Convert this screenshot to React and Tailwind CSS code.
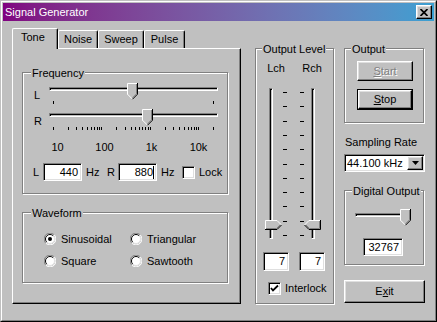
import React from "react";

// win98-ish bevels
const raised =
  "border border-t-white border-l-white border-b-black border-r-black shadow-[inset_-1px_-1px_0_#808080,inset_1px_1px_0_#dfdfdf] bg-[#c0c0c0]";
const sunken =
  "border border-t-[#808080] border-l-[#808080] border-b-white border-r-white shadow-[inset_1px_1px_0_#000,inset_-1px_-1px_0_#dfdfdf] bg-white";
const hTrack =
  "absolute h-[4px] border border-t-[#808080] border-l-[#808080] border-b-white border-r-white shadow-[inset_1px_1px_0_#000]";
const vTrack =
  "absolute w-[4px] border border-t-[#808080] border-l-[#808080] border-b-white border-r-white shadow-[inset_1px_1px_0_#000]";

// log scale 10 Hz .. 20 kHz over 160px
const logX = (f) => 9 + (160 * Math.log10(f / 10)) / Math.log10(2000);
const freqTicks = [];
for (let e = 1; e <= 3; e++) for (let d = 1; d <= 9; d++) freqTicks.push(d * 10 ** e);
freqTicks.push(10000, 20000);

const levelTicks = Array.from({ length: 11 }, (_, i) => 4 + Math.round(i * 14.3));

function Group({ label, labelPos, className, children }) {
  return (
    <div className={"relative border border-[#808080] shadow-[inset_1px_1px_0_#fff,1px_1px_0_#fff] " + className}>
      <span className={"absolute top-[-6px] bg-[#c0c0c0] px-[1px] whitespace-nowrap " + labelPos}>{label}</span>
      {children}
    </div>
  );
}

function ThumbDown({ className }) {
  return (
    <svg width="11" height="17" viewBox="0 0 11 17" className={"absolute top-0 " + className}>
      <path d="M0 0H11V11L5.5 16.5L0 11Z" fill="#c0c0c0" />
      <path d="M0.5 11.5V0.5H10" fill="none" stroke="#fff" />
      <path d="M0.5 11.2L5.2 15.9" fill="none" stroke="#fff" />
      <path d="M10.5 0V11.2L5.5 16.2" fill="none" stroke="#000" />
      <path d="M9.5 1V10.8L5.5 14.8" fill="none" stroke="#808080" />
    </svg>
  );
}

function ThumbRight({ className }) {
  return (
    <svg width="17" height="10" viewBox="0 0 17 10" className={"absolute " + className}>
      <path d="M0 0H12L17 5L12 10H0Z" fill="#c0c0c0" />
      <path d="M0.5 9.5V0.5H12L16 4.5" fill="none" stroke="#fff" />
      <path d="M0 9.5H12L16.5 5" fill="none" stroke="#000" />
      <path d="M1 8.5H11.5L15 5" fill="none" stroke="#808080" />
    </svg>
  );
}

function ThumbLeft({ className }) {
  return (
    <svg width="17" height="10" viewBox="0 0 17 10" className={"absolute " + className}>
      <path d="M5 0H17V10H5L0 5Z" fill="#c0c0c0" />
      <path d="M0.5 5L5 0.5H16" fill="none" stroke="#fff" />
      <path d="M16.5 0V9.5H5L0.5 5" fill="none" stroke="#000" />
      <path d="M15.5 1V8.5H5.5L2 5" fill="none" stroke="#808080" />
    </svg>
  );
}

function Radio({ checked }) {
  return (
    <svg width="12" height="12" viewBox="0 0 12 12" className="shrink-0">
      <circle cx="6" cy="6" r="5" fill="#fff" />
      <path d="M10.2 1.8A5.5 5.5 0 0 0 1.8 10.2" fill="none" stroke="#808080" />
      <path d="M1.8 10.2A5.5 5.5 0 0 0 10.2 1.8" fill="none" stroke="#fff" />
      <path d="M9.2 2.8A4.5 4.5 0 0 0 2.8 9.2" fill="none" stroke="#000" />
      <path d="M2.8 9.2A4.5 4.5 0 0 0 9.2 2.8" fill="none" stroke="#dfdfdf" />
      {checked && <circle cx="6" cy="6" r="2" fill="#000" />}
    </svg>
  );
}

function Check({ checked }) {
  return (
    <div className={"w-[13px] h-[13px] shrink-0 " + sunken}>
      {checked && (
        <svg width="11" height="11" viewBox="0 0 11 11">
          <path d="M2 5L4 7.5L9 2.5" fill="none" stroke="#000" strokeWidth="1.8" />
        </svg>
      )}
    </div>
  );
}

function RadioItem({ label, checked, className }) {
  return (
    <div className={"flex items-center gap-[5px] " + className}>
      <Radio checked={checked} />
      <span>{label}</span>
    </div>
  );
}

export default function App() {
  return (
    <div className="w-[437px] h-[322px] font-['Liberation_Sans',Arial,sans-serif] text-[11px] leading-[13px] text-black bg-[#c0c0c0] border border-t-[#c0c0c0] border-l-[#c0c0c0] border-b-black border-r-black">
      <div className="h-full border border-t-white border-l-white border-b-[#808080] border-r-[#808080] p-px flex flex-col">
        {/* Title bar */}
        <div className="h-[18px] shrink-0 flex items-center justify-between bg-linear-to-r from-[#800080] to-[#3aa0d2] pl-[2px] text-white">
          <span>Signal Generator</span>
          <div className={"mr-[2px] w-[16px] h-[14px] flex items-center justify-center " + raised}>
            <svg width="8" height="7" viewBox="0 0 8 7">
              <path d="M0.5 0L7.5 7M7.5 0L0.5 7" stroke="#000" strokeWidth="1.7" />
            </svg>
          </div>
        </div>

        <div className="flex flex-1">
          {/* Tabs + panel */}
          <div className="ml-[9px] mt-[7px] w-[229px] flex flex-col">
            <div className="flex items-end h-[20px]">
              <div className="relative z-10 mb-[-1px] w-[46px] h-[21px] pt-[2px] pl-[8px] bg-[#c0c0c0] border-t border-l border-r border-t-white border-l-white border-r-black shadow-[inset_-1px_0_0_#808080] rounded-t-[2px]">
                Tone
              </div>
              {[
                ["Noise", "w-[40px]"],
                ["Sweep", "w-[46px]"],
                ["Pulse", "w-[41px]"],
              ].map(([t, w]) => (
                <div
                  key={t}
                  className={"h-[18px] pt-[2px] text-center border-t border-l border-r border-t-white border-l-white border-r-black shadow-[inset_-1px_0_0_#808080] rounded-t-[2px] " + w}
                >
                  {t}
                </div>
              ))}
            </div>
            <div className="h-[256px] border border-t-white border-l-white border-b-black border-r-black shadow-[inset_-1px_-1px_0_#808080]">
              <Group label="Frequency" labelPos="left-[8px]" className="ml-[9px] mt-[23px] w-[206px] h-[122px]">
                {/* L slider */}
                <div className="flex mt-[10px]">
                  <span className="w-[21px] pl-[11px] pt-[6px]">L</span>
                  <div className="relative w-[178px] h-[22px]">
                    <div className={hTrack + " left-[5px] top-[4px] w-[169px]"} />
                    <svg width="178" height="3" className="absolute left-0 top-[18px]">
                      <line x1="9.5" x2="9.5" y1="0" y2="3" stroke="#000" />
                      <line x1="169.5" x2="169.5" y1="0" y2="3" stroke="#000" />
                    </svg>
                    <ThumbDown className="left-[83px]" />
                  </div>
                </div>
                {/* R slider */}
                <div className="flex mt-[4px]">
                  <span className="w-[21px] pl-[11px] pt-[6px]">R</span>
                  <div className="relative w-[178px] h-[22px]">
                    <div className={hTrack + " left-[5px] top-[4px] w-[169px]"} />
                    <svg width="178" height="3" className="absolute left-0 top-[18px]">
                      {freqTicks.map((f) => {
                        const x = Math.round(logX(f)) + 0.5;
                        return <line key={f} x1={x} x2={x} y1="0" y2="3" stroke="#000" />;
                      })}
                    </svg>
                    <ThumbDown className="left-[98px]" />
                  </div>
                </div>
                {/* scale labels */}
                <div className="flex mt-[10px] pl-[11px]">
                  {["10", "100", "1k", "10k"].map((t) => (
                    <span key={t} className="w-[47px] text-center">
                      {t}
                    </span>
                  ))}
                </div>
                {/* numeric entry */}
                <div className="flex items-center mt-[9px] pl-[10px] h-[18px]">
                  <span className="w-[10px]">L</span>
                  <div className={"w-[39px] h-[18px] pr-[3px] text-right leading-[16px] " + sunken}>440</div>
                  <span className="ml-[4px] w-[21px]">Hz</span>
                  <span className="w-[11px]">R</span>
                  <div className={"w-[39px] h-[18px] pr-[2px] flex items-center justify-end " + sunken}>
                    <span>880</span>
                    <span className="w-px h-[13px] bg-black" />
                  </div>
                  <span className="ml-[4px] w-[21px]">Hz</span>
                  <Check />
                  <span className="ml-[4px]">Lock</span>
                </div>
              </Group>

              <Group label="Waveform" labelPos="left-[8px]" className="ml-[9px] mt-[18px] w-[206px] h-[71px]">
                <div className="flex pt-[20px] pl-[21px] h-[32px]">
                  <RadioItem label="Sinusoidal" checked className="w-[86px] h-[12px]" />
                  <RadioItem label="Triangular" className="h-[12px]" />
                </div>
                <div className="flex mt-[10px] pl-[21px]">
                  <RadioItem label="Square" className="w-[86px] h-[12px]" />
                  <RadioItem label="Sawtooth" className="h-[12px]" />
                </div>
              </Group>
            </div>
          </div>

          {/* Output level */}
          <div className="ml-[14px] mt-[27px]">
            <Group label="Output Level" labelPos="left-[6px]" className="w-[79px] h-[256px]">
              <div className="flex gap-[10px] pl-[7px] mt-[13px]">
                <span className="w-[26px] text-center">Lch</span>
                <span className="w-[26px] text-center">Rch</span>
              </div>
              <div className="flex gap-[10px] pl-[7px] mt-[13px]">
                <div className="relative w-[26px] h-[152px]">
                  <div className={vTrack + " left-[6px] top-0 h-[151px]"} />
                  <svg width="4" height="152" className="absolute left-[20px] top-0">
                    {levelTicks.map((y) => (
                      <line key={y} x1="0" x2="4" y1={y + 0.5} y2={y + 0.5} stroke="#000" />
                    ))}
                  </svg>
                  <ThumbRight className="left-[2px] top-[132px]" />
                </div>
                <div className="relative w-[26px] h-[152px]">
                  <svg width="4" height="152" className="absolute left-[1px] top-0">
                    {levelTicks.map((y) => (
                      <line key={y} x1="0" x2="4" y1={y + 0.5} y2={y + 0.5} stroke="#000" />
                    ))}
                  </svg>
                  <div className={vTrack + " left-[12px] top-0 h-[151px]"} />
                  <ThumbLeft className="left-[5px] top-[132px]" />
                </div>
              </div>
              <div className="flex gap-[10px] pl-[7px] mt-[12px]">
                <div className={"w-[26px] h-[19px] pr-[3px] text-right leading-[17px] " + sunken}>7</div>
                <div className={"w-[26px] h-[19px] pr-[3px] text-right leading-[17px] " + sunken}>7</div>
              </div>
              <div className="flex items-center pl-[12px] mt-[11px]">
                <Check checked />
                <span className="ml-[4px]">Interlock</span>
              </div>
            </Group>
          </div>

          {/* Right column */}
          <div className="ml-[10px] mt-[27px] w-[81px] flex flex-col">
            <Group label="Output" labelPos="left-[6px]" className="w-[80px] h-[75px]">
              <div
                className={"ml-[12px] mt-[12px] w-[56px] h-[20px] flex items-center justify-center text-[#808080] [text-shadow:1px_1px_0_#fff] " + raised}
              >
                <span>
                  <u>S</u>tart
                </span>
              </div>
              <div className="ml-[12px] mt-[8px] w-[56px] h-[21px] border border-black">
                <div className={"w-full h-full flex items-center justify-center " + raised}>
                  <span>
                    <u>S</u>top
                  </span>
                </div>
              </div>
            </Group>

            <span className="mt-[13px] pl-px">Sampling Rate</span>
            <div className={"mt-[5px] w-[81px] h-[18px] flex items-center justify-between pl-[2px] " + sunken}>
              <span>44.100 kHz</span>
              <div className={"w-[16px] h-[14px] mr-px flex items-center justify-center " + raised}>
                <svg width="7" height="4" viewBox="0 0 7 4">
                  <path d="M0 0H7L3.5 4Z" fill="#000" />
                </svg>
              </div>
            </div>

            <Group label="Digital Output" labelPos="left-[7px]" className="mt-[18px] w-[80px] h-[75px]">
              <div className="relative ml-[6px] mt-[18px] w-[60px] h-[17px]">
                <div className={hTrack + " left-[4px] top-[4px] w-[53px]"} />
                <ThumbDown className="left-[49px]" />
              </div>
              <div className={"ml-[18px] mt-[12px] w-[40px] h-[18px] pr-[3px] text-right leading-[16px] " + sunken}>32767</div>
            </Group>

            <div className={"mt-[15px] w-[81px] h-[23px] flex items-center justify-center " + raised}>
              <span>
                E<u>x</u>it
              </span>
            </div>
          </div>
        </div>
      </div>
    </div>
  );
}
